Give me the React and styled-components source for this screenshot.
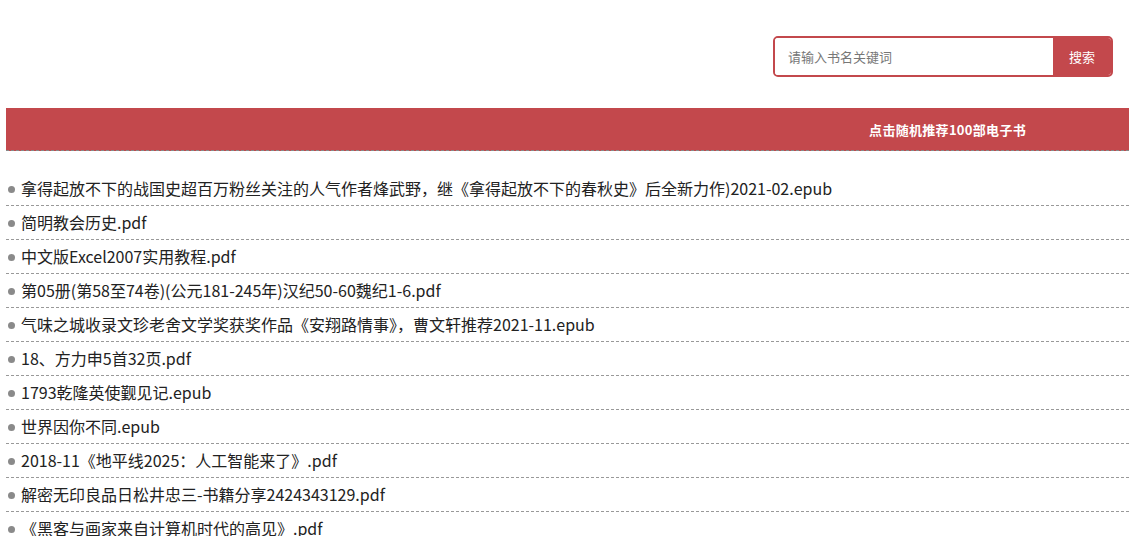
import React from 'react';
import styled, { createGlobalStyle } from 'styled-components';

const GlobalStyle = createGlobalStyle`
  html, body {
    margin: 0;
    padding: 0;
    background: #fff;
  }
  body {
    font-family: "Noto Sans CJK SC", "Noto Sans", sans-serif;
    color: #222;
  }
`;

const Page = styled.div`
  padding-left: 6px;
`;

const TopBar = styled.div`
  height: 108px;
  display: flex;
  justify-content: flex-end;
  align-items: flex-start;
  padding-top: 36px;
  padding-right: 16px;
  box-sizing: border-box;
`;

const SearchForm = styled.form`
  display: flex;
  width: 340px;
  height: 41px;
  box-sizing: border-box;
  border: 2px solid #c3484c;
  border-radius: 5px;
  overflow: hidden;
  margin: 0;
`;

const SearchInput = styled.input`
  flex: 1;
  min-width: 0;
  border: none;
  outline: none;
  padding: 0 0 0 13px;
  font-family: inherit;
  font-size: 13px;
  color: #333;

  &::placeholder {
    color: #777;
  }
`;

const SearchButton = styled.button`
  width: 58px;
  border: none;
  background: #c3484c;
  color: #fff;
  font-family: inherit;
  font-size: 13px;
  cursor: pointer;
  padding: 0;
`;

const RedBar = styled.div`
  height: 42px;
  background: #c3484c;
  border-bottom: 1px dashed #888;
  display: flex;
  align-items: center;
  justify-content: flex-end;
  padding-right: 103px;
`;

const RandomLink = styled.a`
  color: #fff;
  font-size: 13px;
  font-weight: bold;
  letter-spacing: 0.3px;
  text-decoration: none;
  cursor: pointer;
`;

const BookList = styled.ul`
  list-style: none;
  margin: 21px 0 0;
  padding: 0;
`;

const BookItem = styled.li`
  height: 33px;
  line-height: 33px;
  border-bottom: 1px dashed #999;
  font-size: 16px;
  color: #222;
  display: flex;
  align-items: center;
  white-space: nowrap;

  &::before {
    content: '';
    width: 7px;
    height: 7px;
    border-radius: 50%;
    background: #8a8a8a;
    margin: 1px 6px 0 2px;
    flex-shrink: 0;
  }
`;

const books = [
  '拿得起放不下的战国史超百万粉丝关注的人气作者烽武野，继《拿得起放不下的春秋史》后全新力作)2021-02.epub',
  '简明教会历史.pdf',
  '中文版Excel2007实用教程.pdf',
  '第05册(第58至74卷)(公元181-245年)汉纪50-60魏纪1-6.pdf',
  '气味之城收录文珍老舍文学奖获奖作品《安翔路情事》，曹文轩推荐2021-11.epub',
  '18、方力申5首32页.pdf',
  '1793乾隆英使觐见记.epub',
  '世界因你不同.epub',
  '2018-11《地平线2025：人工智能来了》.pdf',
  '解密无印良品日松井忠三-书籍分享2424343129.pdf',
  '《黑客与画家来自计算机时代的高见》.pdf',
];

const App = () => {
  return (
    <Page>
      <GlobalStyle />
      <TopBar>
        <SearchForm onSubmit={(e) => e.preventDefault()}>
          <SearchInput placeholder="请输入书名关键词" />
          <SearchButton type="submit">搜索</SearchButton>
        </SearchForm>
      </TopBar>
      <RedBar>
        <RandomLink>点击随机推荐100部电子书</RandomLink>
      </RedBar>
      <BookList>
        {books.map((title) => (
          <BookItem key={title}>{title}</BookItem>
        ))}
      </BookList>
    </Page>
  );
};

export default App;
